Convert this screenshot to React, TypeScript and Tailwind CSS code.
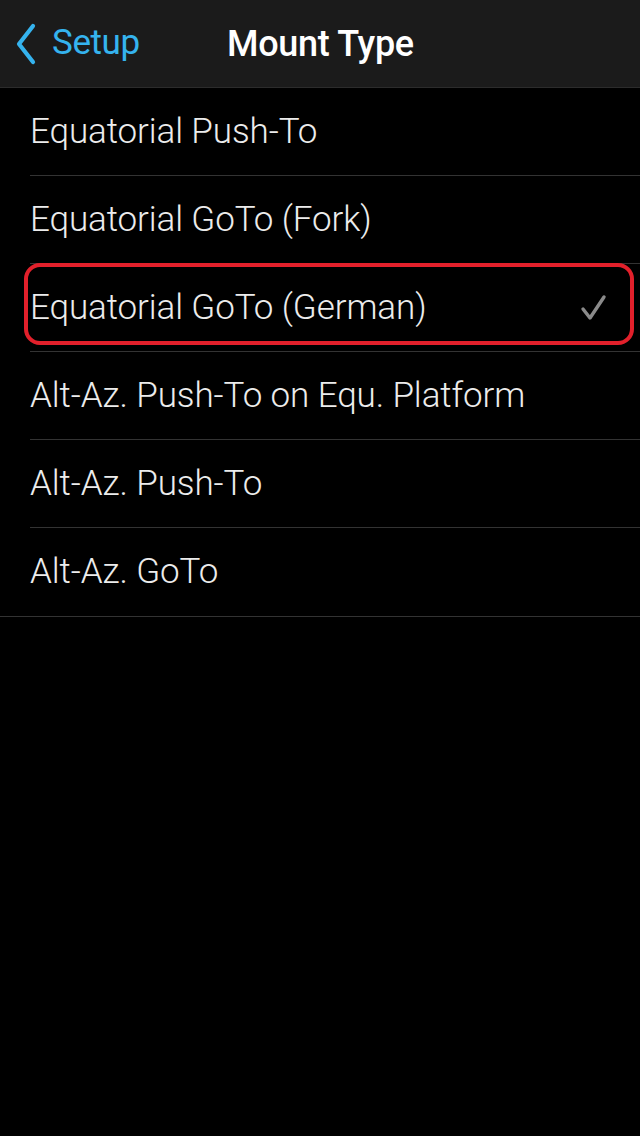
const mounts = [
  "Equatorial Push-To",
  "Equatorial GoTo (Fork)",
  "Equatorial GoTo (German)",
  "Alt-Az. Push-To on Equ. Platform",
  "Alt-Az. Push-To",
  "Alt-Az. GoTo",
];

const selected = 2;

function BackChevron() {
  return (
    <svg width="24" height="44" viewBox="0 0 24 44" className="shrink-0">
      <path d="M19 4 L5 22 L19 40" fill="none" stroke="#35b3ee" strokeWidth="4.2" strokeLinecap="round" strokeLinejoin="round" />
    </svg>
  );
}

export default function App() {
  return (
    <div className="w-[640px] h-[1136px] bg-black text-[#ececec] font-['Roboto',sans-serif] overflow-hidden">
      <header className="h-[88px] bg-[#1b1b1b] border-b border-[#2c2c2c] flex items-center relative">
        <button className="flex items-center gap-[14px] text-[#35b3ee] pl-[14px] h-full">
          <BackChevron />
          <span className="text-[35px] tracking-[-0.4px]">Setup</span>
        </button>
        <h1 className="absolute left-[227px] text-[36px] font-medium text-white tracking-[-0.3px]">Mount Type</h1>
      </header>

      <ul>
        {mounts.map((m, i) => (
          <li key={m} className="pl-[30px] relative">
            <div
              className={
                "h-[88px] flex items-center pr-[30px] border-b " +
                (i === mounts.length - 1 ? "border-transparent" : "border-[#333]")
              }
            >
              <span className="text-[35px] font-light tracking-[-0.1px] flex-1 pt-[1px]">{m}</span>
              {i === selected && (
                <svg width="30" height="30" viewBox="0 0 30 30" className="mr-[2px]">
                  <path d="M5 16 L12 25 L26 4" fill="none" stroke="#8a8a8a" strokeWidth="3.4" strokeLinecap="round" strokeLinejoin="round" />
                </svg>
              )}
            </div>
            {i === selected && (
              <div className="absolute left-[24px] right-[6px] top-[-1px] h-[82px] border-[4px] border-[#e2202b] rounded-[16px] pointer-events-none" />
            )}
          </li>
        ))}
      </ul>
      <div className="border-b border-[#333]" />
    </div>
  );
}
